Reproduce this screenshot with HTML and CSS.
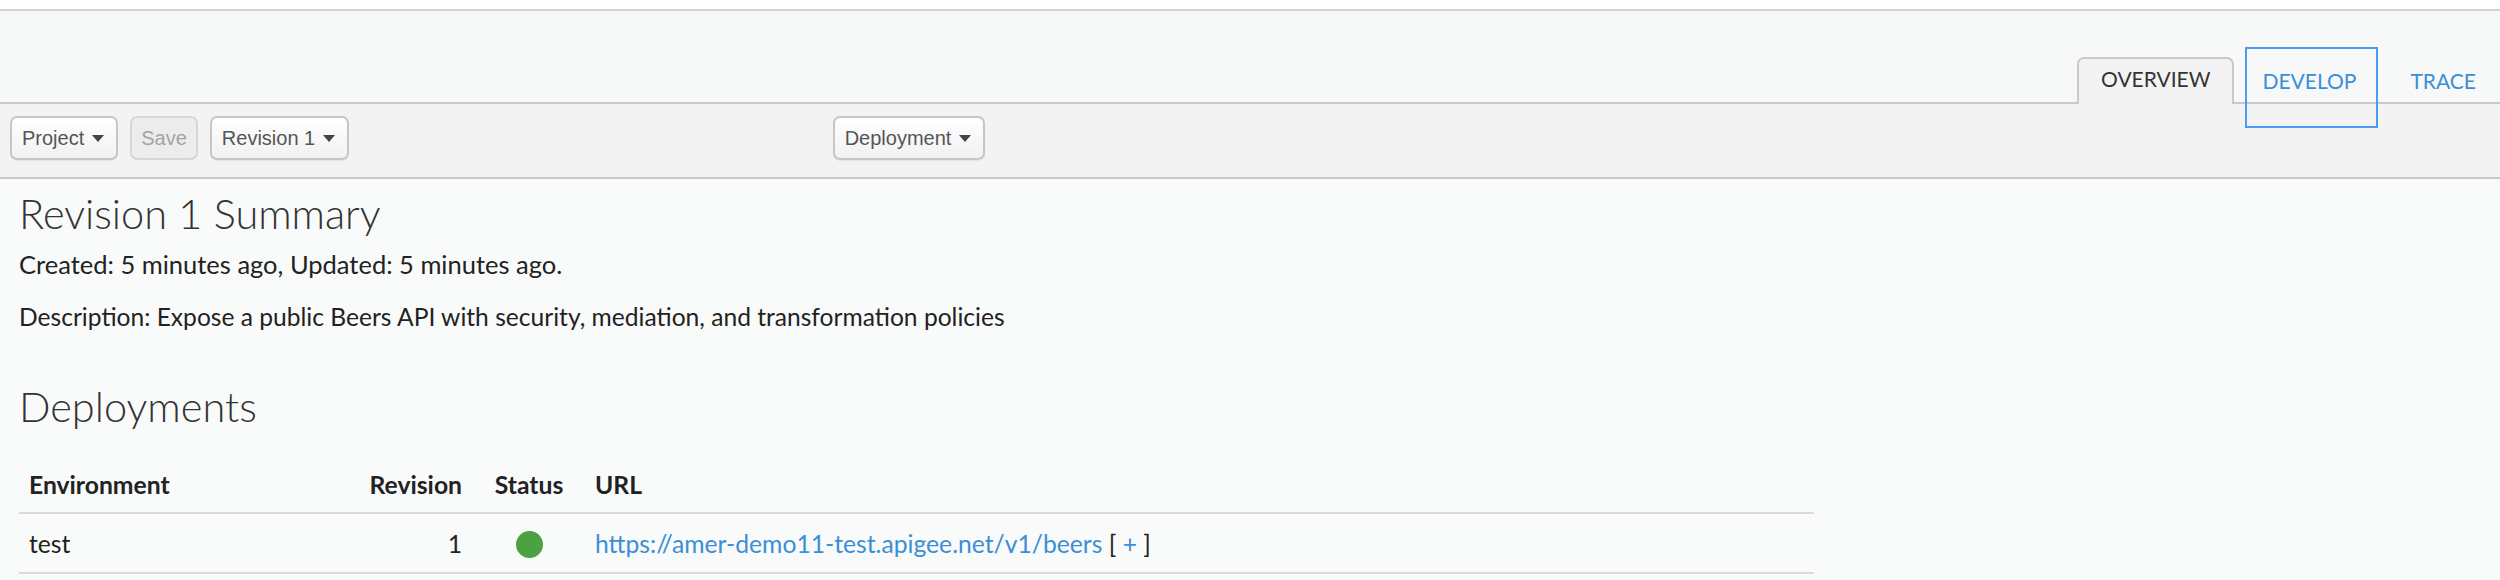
FILE: index.html
```html
<!DOCTYPE html>
<html>
<head>
<meta charset="utf-8">
<link rel="stylesheet" href="styles.css">
</head>
<body>
<div class="topband"></div>
<header class="tabbar">
  <nav class="tabs">
    <a class="tab tab-active">OVERVIEW</a>
    <a class="tab tab-focus">DEVELOP</a>
    <a class="tab tab-link">TRACE</a>
  </nav>
</header>
<div class="toolbar">
  <div class="toolbar-inner">
    <div class="group">
      <button class="btn">Project<span class="caret"></span></button>
      <button class="btn btn-disabled">Save</button>
      <button class="btn">Revision 1<span class="caret"></span></button>
    </div>
    <div class="group">
      <button class="btn">Deployment<span class="caret"></span></button>
    </div>
    <div></div>
  </div>
</div>
<main class="content">
  <h1 class="title">Revision 1 Summary</h1>
  <p class="meta">Created: 5 minutes ago, Updated: 5 minutes ago.</p>
  <p class="desc">Description: Expose a public Beers API with security, mediation, and transformation policies</p>
  <h2 class="title2">Deployments</h2>
  <table class="deploy">
    <colgroup>
      <col class="c-env"><col class="c-rev"><col class="c-status"><col class="c-url">
    </colgroup>
    <thead>
      <tr>
        <th class="env">Environment</th>
        <th class="rev">Revision</th>
        <th class="status">Status</th>
        <th class="url">URL</th>
      </tr>
    </thead>
    <tbody>
      <tr>
        <td class="env">test</td>
        <td class="rev">1</td>
        <td class="status"><span class="dot"></span></td>
        <td class="url"><a class="link">https://amer-demo11-test.apigee.net/v1/beers</a> [ <a class="link">+</a> ]</td>
      </tr>
    </tbody>
  </table>
</main>
</body>
</html>
```
FILE: styles.css
```css
html, body {
  margin: 0;
  padding: 0;
}
body {
  background: #f9fafa;
  font-family: "Lato", "Open Sans", sans-serif;
  color: #222;
  width: 2500px;
  height: 580px;
  overflow: hidden;
}
.topband {
  height: 9px;
  background: #ffffff;
  border-bottom: 2px solid #d2d2d2;
}
.tabbar {
  height: 91px;
  background: #f7f8f8;
  display: flex;
  justify-content: flex-end;
  align-items: flex-end;
}
.tabs {
  display: flex;
  align-items: flex-end;
  padding-right: 24px;
}
.tab {
  position: relative;
  z-index: 2;
  font-size: 21px;
  line-height: 25px;
  text-decoration: none;
  display: block;
}
.tab-active {
  color: #333;
  background: #f3f3f3;
  border: 2px solid #c9c9c9;
  border-bottom: none;
  border-radius: 7px 7px 0 0;
  padding: 7px 21px 13px 22px;
  margin-bottom: -2px;
}
.tab-focus {
  color: #3b8fd6;
  outline: 2px solid #4c9cf5;
  padding: 19px 20px 33px 16px;
  margin-left: 13px;
  margin-bottom: -24px;
}
.tab-link {
  color: #3b8fd6;
  padding: 19px 0 33px 0;
  margin-left: 34px;
  margin-bottom: -24px;
}
.toolbar {
  background: #f3f3f3;
  border-top: 2px solid #c9c9c9;
  border-bottom: 2px solid #c9c9c9;
  height: 73px;
  box-sizing: content-box;
}
.toolbar-inner {
  width: 1818px;
  display: grid;
  grid-template-columns: 1fr auto 1fr;
  padding-top: 12px;
}
.group {
  display: flex;
  gap: 12px;
  padding-left: 10px;
}
.toolbar-inner .group + .group {
  padding-left: 0;
}
.btn {
  height: 44px;
  box-sizing: border-box;
  border: 2px solid #c6c6c6;
  border-radius: 7px;
  background: linear-gradient(#ffffff, #f1f1f1);
  font-family: "Liberation Sans", Arial, sans-serif;
  font-size: 20px;
  color: #555;
  padding: 0 12px 0 10px;
  display: flex;
  align-items: center;
  box-shadow: 0 1px 1px rgba(0,0,0,0.06);
}
.btn-disabled {
  background: #ececec;
  color: #a3a3a3;
  border-color: #d6d6d6;
  padding: 0 9px;
  box-shadow: none;
}
.caret {
  display: inline-block;
  width: 0;
  height: 0;
  border-left: 6px solid transparent;
  border-right: 6px solid transparent;
  border-top: 7px solid #444;
  margin-left: 8px;
}
.content {
  padding: 0 19px;
}
.title {
  margin: 10px 0 0 0;
  font-size: 41.5px;
  line-height: 48px;
  font-weight: 300;
  color: #333;
}
.meta {
  margin: 10px 0 0 0;
  font-size: 25.5px;
  line-height: 34px;
}
.desc {
  margin: 19px 0 0 0;
  font-size: 24.6px;
  line-height: 34px;
}
.title2 {
  margin: 48px 0 0 0;
  font-size: 41.5px;
  line-height: 48px;
  font-weight: 300;
  color: #333;
}
.deploy {
  width: 1795px;
  border-collapse: collapse;
  margin-top: 28px;
  font-size: 24.7px;
  line-height: 34px;
}
.c-env { width: 338px; }
.c-rev { width: 120px; }
.c-status { width: 104px; }
.deploy th {
  font-weight: 700;
  color: #222;
  padding: 10px 0 10px 0;
  border-bottom: 2px solid #dadada;
}
.deploy td {
  padding: 13px 0 11px 0;
  border-bottom: 2px solid #dadada;
}
.env { text-align: left; padding-left: 10px !important; }
.rev { text-align: right; padding-right: 15px !important; }
.status { text-align: center; }
.url { text-align: left; padding-left: 14px !important; }
.dot {
  display: inline-block;
  width: 27px;
  height: 27px;
  border-radius: 50%;
  background: #4aa240;
  vertical-align: middle;
  position: relative;
  top: -2px;
}
.link {
  color: #3b8fd6;
  text-decoration: none;
}
```
